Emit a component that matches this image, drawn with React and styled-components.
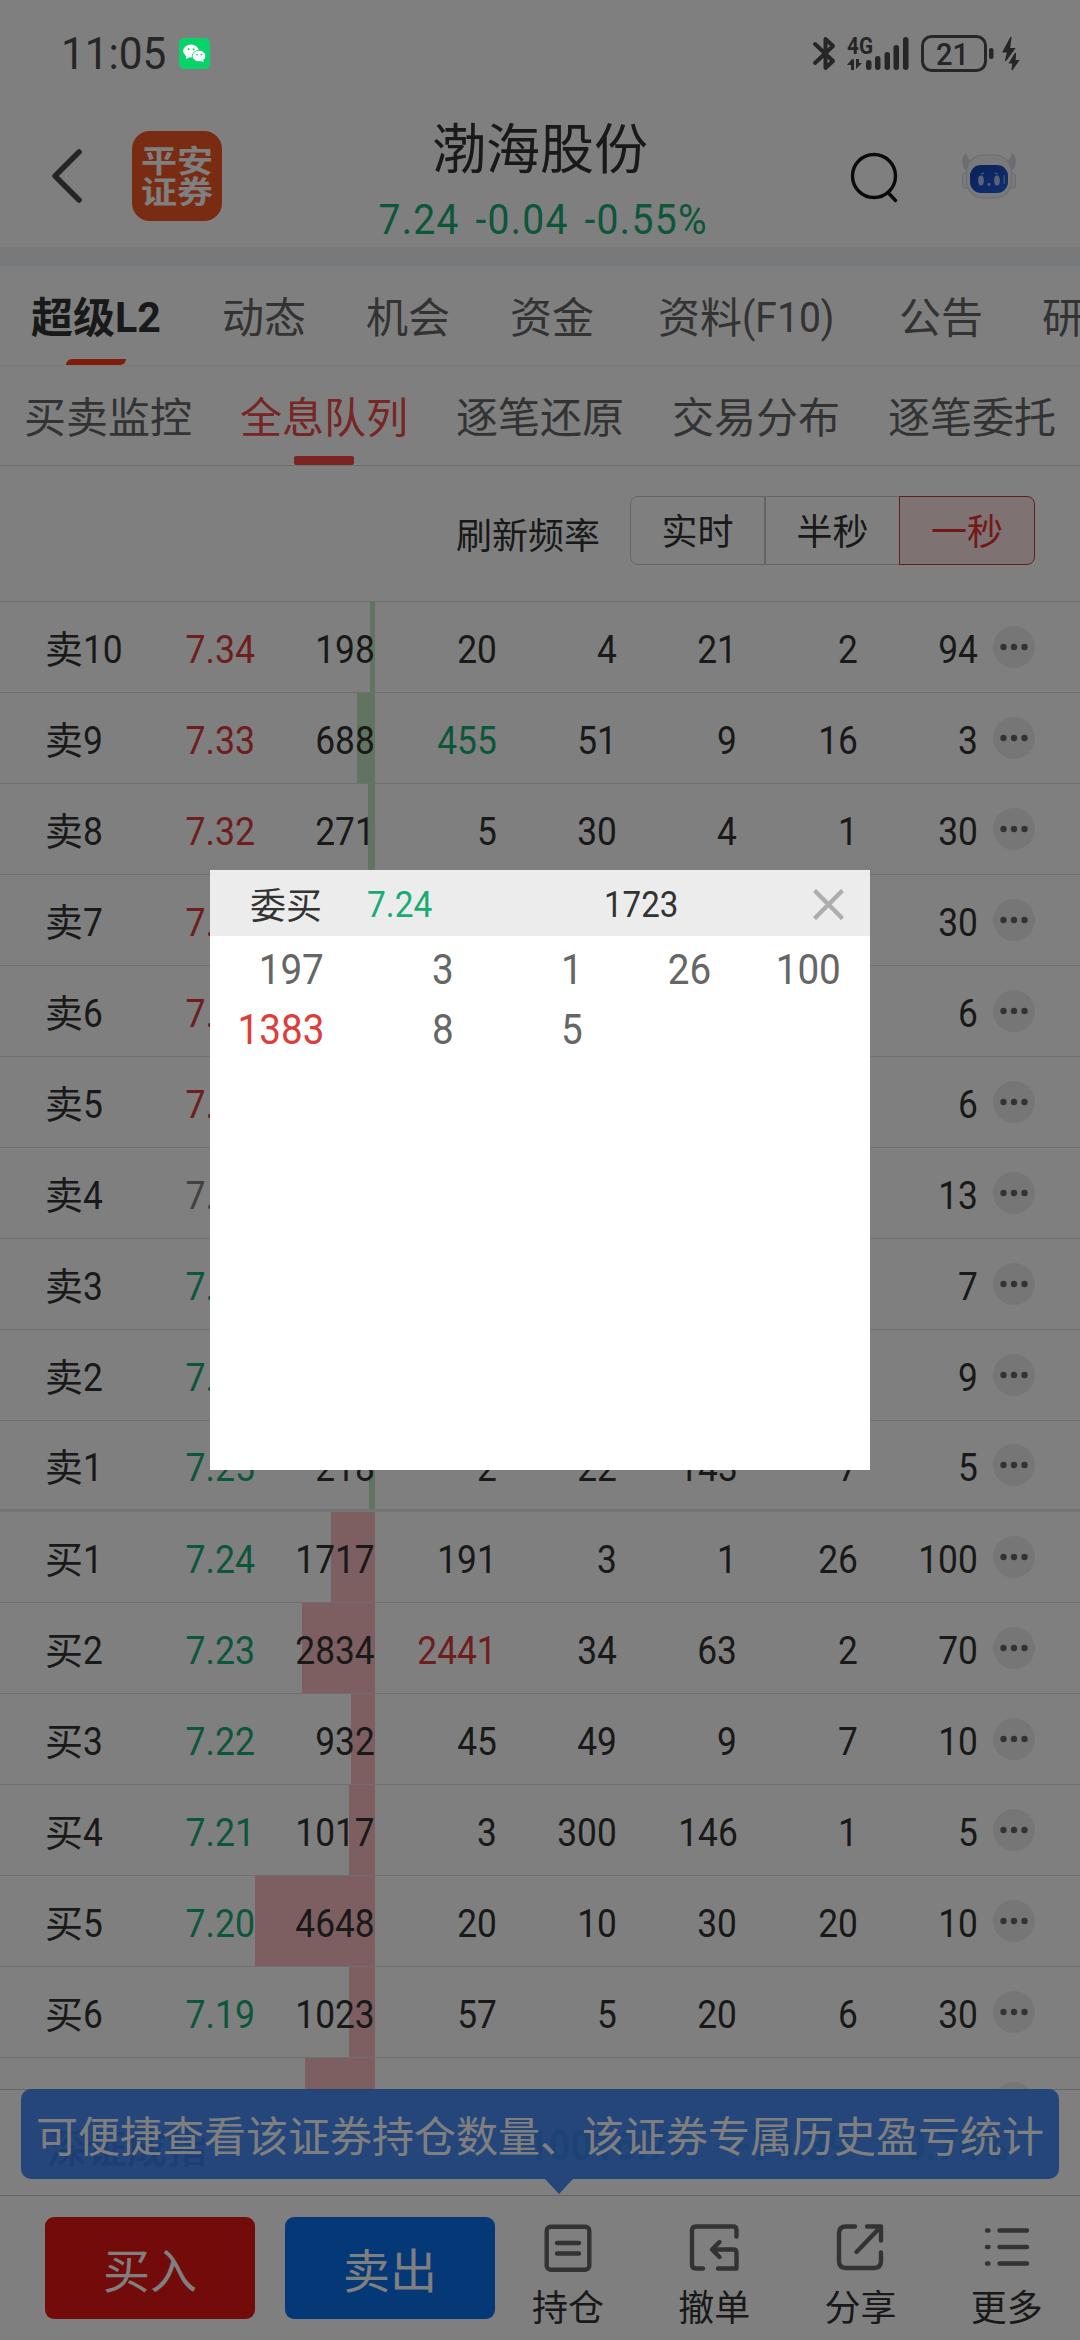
import React from 'react';
import styled, { createGlobalStyle } from 'styled-components';

const colors = {
  text: '#333333',
  muted: '#666666',
  red: '#dc3e3a',
  green: '#18ac74',
  line: '#dedede',
};

const GlobalStyle = createGlobalStyle`
  * {
    box-sizing: border-box;
  }
  body {
    margin: 0;
    overflow: hidden;
    background: #ffffff;
    color: ${colors.text};
    font-family: 'Noto Sans CJK SC', sans-serif;
  }
`;

const Screen = styled.div`
  width: 1080px;
  height: 2340px;
  display: flex;
  flex-direction: column;
  overflow: hidden;
  background: #ffffff;
`;

/* Roboto squeezed to the proportions of a DIN numeral */
const Num = styled.span`
  display: inline-block;
  font-family: Roboto, 'Noto Sans CJK SC', sans-serif;
  font-size: ${({ $size }) => $size || 39}px;
  font-weight: ${({ $weight }) => $weight || 400};
  line-height: 1.2;
  white-space: pre;
  transform: scaleX(${({ $squeeze }) => $squeeze || 0.905});
  transform-origin: ${({ $origin }) => $origin || 'right'} center;
  color: ${({ $tone }) => colors[$tone] || $tone || 'inherit'};
`;

/* Status bar */

const StatusBar = styled.header`
  height: 104px;
  padding: 3px 60px 0 61px;
  display: flex;
  align-items: center;
  justify-content: space-between;
  color: #4c4c4c;
`;

const StatusGroup = styled.div`
  display: flex;
  align-items: center;
`;

const WechatBadge = styled.svg`
  position: relative;
  z-index: 20;
  width: 31px;
  height: 31px;
  margin-left: 6px;
`;

const StatusIcons = styled.svg`
  width: 210px;
  height: 40px;
`;

/* Stock header */

const StockHeader = styled.div`
  height: 144px;
  padding: 0 60px 0 50px;
  display: grid;
  grid-template-columns: 82px 101px 1fr 115px 58px;
  align-items: center;
  border-bottom: 1px solid #f0f0f0;
`;

const BackIcon = styled.svg`
  width: 36px;
  height: 56px;
`;

const Logo = styled.div`
  width: 90px;
  height: 90px;
  border-radius: 18px;
  background: #f45826;
  display: flex;
  align-items: center;
  justify-content: center;

  span {
    width: 74px;
    font-size: 36px;
    font-weight: 700;
    line-height: 35px;
    padding-bottom: 3px;
    text-align: center;
    color: #ffffff;
    transform: scaleY(0.86);
  }
`;

const StockTitle = styled.div`
  display: flex;
  flex-direction: column;
  align-items: center;
`;

const StockName = styled.h1`
  margin: 0;
  font-size: 54px;
  font-weight: 400;
  line-height: 62px;
`;

const StockQuote = styled.div`
  height: 60px;
  padding: 28px 0 0 6px;
  display: flex;
  align-items: center;
  justify-content: center;
  letter-spacing: 1.4px;
  word-spacing: 5px;
`;

const HeaderIcon = styled.svg`
  width: 54px;
  height: 54px;
`;

const Band = styled.div`
  height: 18px;
  background: #eff2f6;
`;

/* Tabs */

const Tabs = styled.nav`
  flex: none;
  display: flex;
  overflow: hidden;
  height: ${({ $height }) => $height}px;
  padding-left: ${({ $start }) => $start}px;
  border-bottom: 1px solid ${({ $line }) => $line};
`;

const Tab = styled.div`
  flex: none;
  width: ${({ $width }) => $width}px;
  display: flex;
  flex-direction: column;
  justify-content: space-between;
  font-size: 42px;
  line-height: 82px;
  white-space: nowrap;
  color: ${({ $active }) => ($active ? colors.text : colors.muted)};
  font-weight: ${({ $active }) => ($active ? 700 : 400)};
`;

const SubTab = styled(Tab)`
  color: ${({ $active }) => ($active ? '#f04a4a' : colors.muted)};
  font-weight: 400;
`;

const TabText = styled.div`
  display: flex;
  align-items: center;
  padding-top: 8px;

  ${Num} {
    padding-top: 7px;
  }
`;

const Indicator = styled.i`
  width: 60px;
  height: 6px;
  margin-left: 35px;
  border-radius: 6px 0 6px 0;
  background: #ff3a10;
`;

const SubIndicator = styled(Indicator)`
  height: 9px;
  margin-left: 54px;
  border-radius: 2px;
  background: #f84646;
`;

/* Refresh rate */

const RefreshRow = styled.div`
  flex: none;
  height: 136px;
  padding: 0 45px 6px 0;
  display: flex;
  align-items: center;
  justify-content: flex-end;
  font-size: 36px;
  border-bottom: 1px solid ${colors.line};

  label {
    margin: 5px 30px 0 0;
  }
`;

const Segment = styled.button`
  width: ${({ $active }) => ($active ? 136 : 135)}px;
  height: 69px;
  margin: 0 0 0 ${({ $active }) => ($active ? -1 : 0)}px;
  padding: 0 0 3px;
  border: 1px solid ${({ $active }) => ($active ? '#c43c3a' : '#c8c8c8')};
  background: ${({ $active }) => ($active ? '#ffe4e4' : '#ffffff')};
  color: ${({ $active }) => ($active ? '#e63230' : colors.text)};
  font: inherit;

  &:first-of-type {
    border-radius: 8px 0 0 8px;
  }
  &:last-of-type {
    border-radius: 0 8px 8px 0;
  }
`;

/* Order book */

const Book = styled.section`
  flex: none;
  height: 1487px;
  overflow: hidden;
`;

const BookRow = styled.div`
  height: 91px;
  padding-left: 45px;
  display: grid;
  grid-template-columns: 85px 125px 120px 121.5px repeat(4, 120.4px) 15px 42px;
  align-items: center;
  border-bottom: ${({ $last }) => ($last ? '3px solid #e8e8e8' : `1px solid ${colors.line}`)};
`;

const Level = styled.div`
  display: flex;
  align-items: center;
  white-space: nowrap;
  font-size: 38px;
  line-height: 46px;
`;

const Cell = styled.div`
  position: relative;
  height: 100%;
  display: flex;
  align-items: center;
  justify-content: flex-end;
  padding-top: 6px;
`;

const VolumeBar = styled.i`
  position: absolute;
  top: 0;
  right: 0;
  bottom: 0;
  background: ${({ $side }) => ($side === 'sell' ? '#c2e6c2' : '#fabfc2')};

  & + ${Num} {
    position: relative;
  }
`;

const MoreDot = styled.svg`
  grid-column: 10;
  width: 42px;
  height: 42px;
`;

/* Index strip and tooltip */

const IndexStrip = styled.div`
  position: relative;
  flex: none;
  height: 107px;
  padding: 7px 0 0 47px;
  display: flex;
  align-items: center;
  border-top: 1px solid #c8c8c8;
  border-bottom: 1px solid #c8c8c8;
  font-size: 40px;
  font-weight: 500;

  ${Num} {
    flex: none;
    margin-right: 28px;
  }
`;

const IndexName = styled.div`
  flex: none;
  width: 480px;
  line-height: 50px;
`;

const Tooltip = styled.div`
  position: absolute;
  left: 21px;
  top: -1px;
  width: 1038px;
  height: 90px;
  padding-left: 15px;
  border-radius: 10px;
  background: rgba(60, 130, 243, 0.92);
  color: #ffffff;
  font-size: 42px;
  font-weight: 400;
  line-height: 89px;
  white-space: nowrap;

  &::after {
    content: '';
    position: absolute;
    left: 524px;
    top: 90px;
    border: 14px solid transparent;
    border-top: 15px solid #4c8cf4;
    border-bottom: 0;
  }
`;

/* Bottom bar */

const BottomBar = styled.footer`
  flex: 1;
  display: flex;
  padding: 21px 0 0 45px;
`;

const TradeButton = styled.button`
  width: 210px;
  height: 102px;
  margin: 0;
  padding: 0 0 1px;
  border: 0;
  border-radius: 9px;
  background: ${({ $side }) => ($side === 'buy' ? '#e61616' : '#0a70ec')};
  color: #ffffff;
  font: inherit;
  font-size: 47px;

  & + & {
    margin-left: 30px;
  }
`;

const Actions = styled.div`
  flex: 1;
  display: flex;
`;

const Action = styled.div`
  flex: 1;
  display: flex;
  flex-direction: column;
  align-items: center;
  font-size: 36px;
  line-height: 44px;

  svg {
    width: 54px;
    height: 54px;
    margin: 4px 0 8px;
    fill: none;
    stroke: ${colors.muted};
    stroke-width: 4.4;
    stroke-linecap: round;
    stroke-linejoin: round;
  }
`;

/* Popup with the queue */

const Backdrop = styled.div`
  position: fixed;
  inset: 0;
  z-index: 10;
  width: 1080px;
  height: 2340px;
  display: flex;
  align-items: center;
  justify-content: center;
  background: rgba(0, 0, 0, 0.5);
`;

const Dialog = styled.div`
  width: 660px;
  height: 600px;
  background: #ffffff;
`;

const DialogHead = styled.div`
  height: 66px;
  padding: 0 26px 0 40px;
  display: grid;
  grid-template-columns: 117px 237px 1fr 31px;
  align-items: center;
  background: #ececec;
  font-size: 36px;
  line-height: 44px;

  ${Num} {
    padding-top: 5px;
  }
`;

const DialogTitle = styled.div`
  padding-bottom: 1px;
`;

const CloseIcon = styled.svg`
  width: 31px;
  height: 31px;
  margin-top: 2px;
`;

const Queue = styled.div`
  padding-top: 4px;
  width: 630px;
  display: grid;
  grid-template-columns: 114px repeat(4, 129.2px);
  grid-auto-rows: 60px;
  align-items: center;
  justify-items: end;
`;

const tabs = [
  { label: '超级', latin: 'L2', width: 191, squeeze: 0.98, active: true },
  { label: '动态', width: 144 },
  { label: '机会', width: 144 },
  { label: '资金', width: 148 },
  { label: '资料', latin: '(F10)', width: 241, squeeze: 0.93 },
  { label: '公告', width: 143 },
  { label: '研报', width: 90 },
];

const subTabs = ['买卖监控', '全息队列', '逐笔还原', '交易分布', '逐笔委托'];

const FULL_VOLUME = 4648;

const book = [
  { side: 'sell', level: 10, price: '7.34', tone: 'red', volume: 198, queue: [20, 4, 21, 2, 94] },
  { side: 'sell', level: 9, price: '7.33', tone: 'red', volume: 688, queue: [455, 51, 9, 16, 3] },
  { side: 'sell', level: 8, price: '7.32', tone: 'red', volume: 271, queue: [5, 30, 4, 1, 30] },
  { side: 'sell', level: 7, price: '7.31', tone: 'red', queue: ['', '', '', '', 30] },
  { side: 'sell', level: 6, price: '7.30', tone: 'red', queue: ['', '', '', '', 6] },
  { side: 'sell', level: 5, price: '7.29', tone: 'red', queue: ['', '', '', '', 6] },
  { side: 'sell', level: 4, price: '7.28', tone: '#858585', queue: ['', '', '', '', 13] },
  { side: 'sell', level: 3, price: '7.27', tone: 'green', queue: ['', '', '', '', 7] },
  { side: 'sell', level: 2, price: '7.26', tone: 'green', queue: ['', '', '', '', 9] },
  { side: 'sell', level: 1, price: '7.25', tone: 'green', volume: 218, queue: [2, 22, 143, 7, 5] },
  { side: 'buy', level: 1, price: '7.24', tone: 'green', volume: 1717, queue: [191, 3, 1, 26, 100] },
  { side: 'buy', level: 2, price: '7.23', tone: 'green', volume: 2834, queue: [2441, 34, 63, 2, 70] },
  { side: 'buy', level: 3, price: '7.22', tone: 'green', volume: 932, queue: [45, 49, 9, 7, 10] },
  { side: 'buy', level: 4, price: '7.21', tone: 'green', volume: 1017, queue: [3, 300, 146, 1, 5] },
  { side: 'buy', level: 5, price: '7.20', tone: 'green', volume: 4648, queue: [20, 10, 30, 20, 10] },
  { side: 'buy', level: 6, price: '7.19', tone: 'green', volume: 1023, queue: [57, 5, 20, 6, 30] },
  { side: 'buy', level: 7, price: '7.18', tone: 'green', volume: 2711, queue: ['', '', '', '', ''] },
];

const orderQueue = [197, 3, 1, 26, 100, 1383, 8, 5];

// Big orders are painted in the colour of their side
const orderTone = (side, amount) => {
  if (amount < 400) return 'text';
  return side === 'sell' ? 'green' : 'red';
};

const StatusRow = () => (
  <StatusBar>
    <StatusGroup>
      <Num $size={45} $squeeze={0.94} $origin="left">
        11:05
      </Num>
      <WechatBadge viewBox="0 0 31 31">
        <rect width="31" height="31" rx="5" fill="#07d36a" />
        <ellipse cx="12" cy="13" rx="7.8" ry="6.5" fill="#fff" />
        <path d="M7 17v4l4-2z" fill="#fff" />
        <ellipse cx="20" cy="18" rx="6.8" ry="5.7" fill="#fff" stroke="#07d36a" strokeWidth="0.8" />
        <path d="M21 22l3.5 2.5-.5-4z" fill="#fff" />
        <g fill="#07d36a">
          <circle cx="9.6" cy="11.3" r="1" />
          <circle cx="14.6" cy="11.3" r="1" />
          <circle cx="18" cy="16.6" r="0.9" />
          <circle cx="22.3" cy="16.6" r="0.9" />
        </g>
      </WechatBadge>
    </StatusGroup>
    <StatusIcons viewBox="0 0 210 40" fill="#4c4c4c">
      <path
        d="M5 10l18 17-7.500 7V23M15.500 17V5l7.500 7L5 29"
        fill="none"
        stroke="#4c4c4c"
        strokeWidth="4"
        strokeLinecap="round"
        strokeLinejoin="round"
      />
      <text x="37" y="19.500" fontFamily="Roboto" fontWeight="700" fontSize="23" textLength="26" lengthAdjust="spacingAndGlyphs">
        4G
      </text>
      <path d="M41 26v10h3V25zM42 25l-5 6h5zM46 25v10l6-6h-3v-4z" />
      <rect x="56" y="26" width="5.500" height="10" rx="2.700" />
      <rect x="65" y="22" width="5.500" height="14" rx="2.700" />
      <rect x="74.500" y="18" width="5.500" height="18" rx="2.700" />
      <rect x="83.500" y="11" width="5.500" height="25" rx="2.700" />
      <rect x="93" y="3" width="5.500" height="33" rx="2.700" />
      <rect x="112.500" y="2.500" width="63" height="34" rx="9" fill="none" stroke="#4c4c4c" strokeWidth="3" />
      <text x="142.500" y="31" fontFamily="Roboto" fontSize="32" fontWeight="500" textAnchor="middle" textLength="33" lengthAdjust="spacingAndGlyphs">
        21
      </text>
      <rect x="179" y="14" width="4.500" height="11" rx="2" />
      <path
        d="M201 3l-8 15h4.500l-2 9 9-12.500h-5zM205.500 19l-6 10h3.500l-1 7 6.500-9.500h-3.500z"
        stroke="#4c4c4c"
        strokeWidth="1.200"
      />
    </StatusIcons>
  </StatusBar>
);

const Header = () => (
  <StockHeader>
    <BackIcon viewBox="0 0 36 56">
      <path d="M29 4L5 28l24 24" fill="none" stroke="#4c4c4c" strokeWidth="5.500" strokeLinecap="round" strokeLinejoin="round" />
    </BackIcon>
    <Logo>
      <span>平安证券</span>
    </Logo>
    <StockTitle>
      <StockName>渤海股份</StockName>
      <StockQuote>
        <Num $size={42} $squeeze={0.93} $origin="center" $tone="green">
          7.24 -0.04 -0.55%
        </Num>
      </StockQuote>
    </StockTitle>
    <HeaderIcon viewBox="0 0 54 54">
      <g fill="none" stroke="#141414" strokeWidth="3.400" strokeLinecap="round">
        <circle cx="27" cy="27" r="21.500" />
        <path d="M41 43.500l7.500 8" />
      </g>
    </HeaderIcon>
    <HeaderIcon viewBox="0 0 54 54">
      <defs>
        <linearGradient id="visor" x1="0" y1="0" x2="1" y2="1">
          <stop offset="0" stopColor="#1440b0" />
          <stop offset="1" stopColor="#2460e0" />
        </linearGradient>
      </defs>
      <g fill="#f4f5f8" stroke="#dadce2" strokeWidth="1.200">
        <path d="M5 22C-1 16 0 8 4 5c1 6 4 8 8 9zM49 22c6-6 5-14 1-17-1 6-4 8-8 9z" fill="#d4dae6" />
        <rect x="0.600" y="24" width="7" height="15" rx="3" />
        <rect x="46.400" y="24" width="7" height="15" rx="3" />
        <rect x="4.500" y="6" width="45" height="43" rx="17" />
      </g>
      <rect x="8" y="16" width="38" height="28" rx="11" fill="url(#visor)" />
      <g fill="#b4c8f0">
        <ellipse cx="19" cy="31.500" rx="2.800" ry="5" />
        <ellipse cx="35" cy="31.500" rx="2.800" ry="5" />
        <circle cx="27" cy="35.500" r="1.400" />
        <rect x="41.500" y="26" width="1.500" height="9" rx="0.700" opacity="0.6" />
      </g>
      <path d="M19 25l3-1M33 24l3 1" stroke="#b4c8f0" strokeWidth="1.200" />
    </HeaderIcon>
  </StockHeader>
);

const OrderRow = ({ side, level, price, tone, volume, queue }) => (
  <BookRow $last={side === 'sell' && level === 1}>
    <Level>
      {side === 'sell' ? '卖' : '买'}
      <Cell>
        <Num $origin="left">{level}</Num>
      </Cell>
    </Level>
    <Cell>
      <Num $tone={tone} $squeeze={0.915}>
        {price}
      </Num>
    </Cell>
    <Cell>
      {volume && (
        <>
          <VolumeBar $side={side} style={{ width: `${(volume / FULL_VOLUME) * 100}%` }} />
          <Num>{volume}</Num>
        </>
      )}
    </Cell>
    {queue.map((amount, i) => (
      <Cell key={i}>
        <Num $tone={orderTone(side, amount)}>{amount}</Num>
      </Cell>
    ))}
    <MoreDot viewBox="0 0 42 42">
      <circle cx="21" cy="21" r="21" fill="#ececec" />
      <g fill={colors.muted}>
        <circle cx="10.500" cy="21" r="3.200" />
        <circle cx="21" cy="21" r="3.200" />
        <circle cx="31.500" cy="21" r="3.200" />
      </g>
    </MoreDot>
  </BookRow>
);

const Footer = () => (
  <BottomBar>
    <TradeButton $side="buy">买入</TradeButton>
    <TradeButton $side="sell">卖出</TradeButton>
    <Actions>
      <Action>
        <svg viewBox="0 0 54 54">
          <rect x="5.700" y="5.700" width="42.600" height="43" rx="4" />
          <path d="M16 22h22M16 32.500h22" />
        </svg>
        持仓
      </Action>
      <Action>
        <svg viewBox="0 0 54 54">
          <path d="M49.500 15.500V9q0-3.500-3.500-3.500H9Q5 5.500 5 9.500v34q0 4 4 4h7M31 47.500h18.500V31.500q0-3-3-3H26M32.500 21l-7.500 7.500 7.500 7.500" />
        </svg>
        撤单
      </Action>
      <Action>
        <svg viewBox="0 0 54 54">
          <path d="M21 5.500H12q-7 0-7 7V40q0 7 7 7h28q7 0 7-7v-8.500M33 5.500h14v14M47 5.500L22.500 31" />
        </svg>
        分享
      </Action>
      <Action>
        <svg viewBox="0 0 54 54">
          <path d="M7 9.500h1.500M19.500 9.500h27.500M7 26h1.500M19.500 26h27.500M7 42.500h1.500M19.500 42.500h27.500" />
        </svg>
        更多
      </Action>
    </Actions>
  </BottomBar>
);

const QueueDialog = () => (
  <Backdrop>
    <Dialog>
      <DialogHead>
        <DialogTitle>委买</DialogTitle>
        <Num $size={36} $squeeze={0.93} $tone="green" $origin="left">
          7.24
        </Num>
        <Num $size={36} $squeeze={0.92} $origin="left">
          1723
        </Num>
        <CloseIcon viewBox="0 0 31 31">
          <path d="M1.500 1.500l28 28M29.500 1.500l-28 28" stroke="#adadad" strokeWidth="4.400" />
        </CloseIcon>
      </DialogHead>
      <Queue>
        {orderQueue.map((amount, i) => (
          <Num key={i} $size={42} $squeeze={0.92} $tone={amount > 400 ? 'red' : 'muted'}>
            {amount}
          </Num>
        ))}
      </Queue>
    </Dialog>
  </Backdrop>
);

const App = () => (
  <Screen>
    <GlobalStyle />
    <StatusRow />
    <Header />
    <Band />
    <Tabs $height={100} $start={31} $line="#f2f2f2">
      {tabs.map(({ label, latin, width, squeeze, active }) => (
        <Tab key={label} $width={width} $active={active}>
          <TabText>
            {label}
            {latin && (
              <Num $size={42} $weight={active ? 700 : 400} $squeeze={squeeze} $origin="left">
                {latin}
              </Num>
            )}
          </TabText>
          {active && <Indicator />}
        </Tab>
      ))}
    </Tabs>
    <Tabs $height={100} $start={24} $line={colors.line}>
      {subTabs.map((label, i) => (
        <SubTab key={label} $width={216} $active={i === 1}>
          <TabText>{label}</TabText>
          {i === 1 && <SubIndicator />}
        </SubTab>
      ))}
    </Tabs>
    <RefreshRow>
      <label>刷新频率</label>
      <Segment>实时</Segment>
      <Segment>半秒</Segment>
      <Segment $active>一秒</Segment>
    </RefreshRow>
    <Book>
      {book.map((row) => (
        <OrderRow key={row.side + row.level} {...row} />
      ))}
    </Book>
    <IndexStrip>
      <IndexName>深证成指</IndexName>
      <Num $weight={700} $size={42} $tone="green" $origin="left">
        10016.77
      </Num>
      <Num $weight={700} $size={42} $tone="green" $origin="left">
        -74.39
      </Num>
      <Num $weight={700} $size={42} $tone="green" $origin="left">
        -0.74%
      </Num>
      <Tooltip>可便捷查看该证券持仓数量、该证券专属历史盈亏统计</Tooltip>
    </IndexStrip>
    <Footer />
    <QueueDialog />
  </Screen>
);

export default App;
